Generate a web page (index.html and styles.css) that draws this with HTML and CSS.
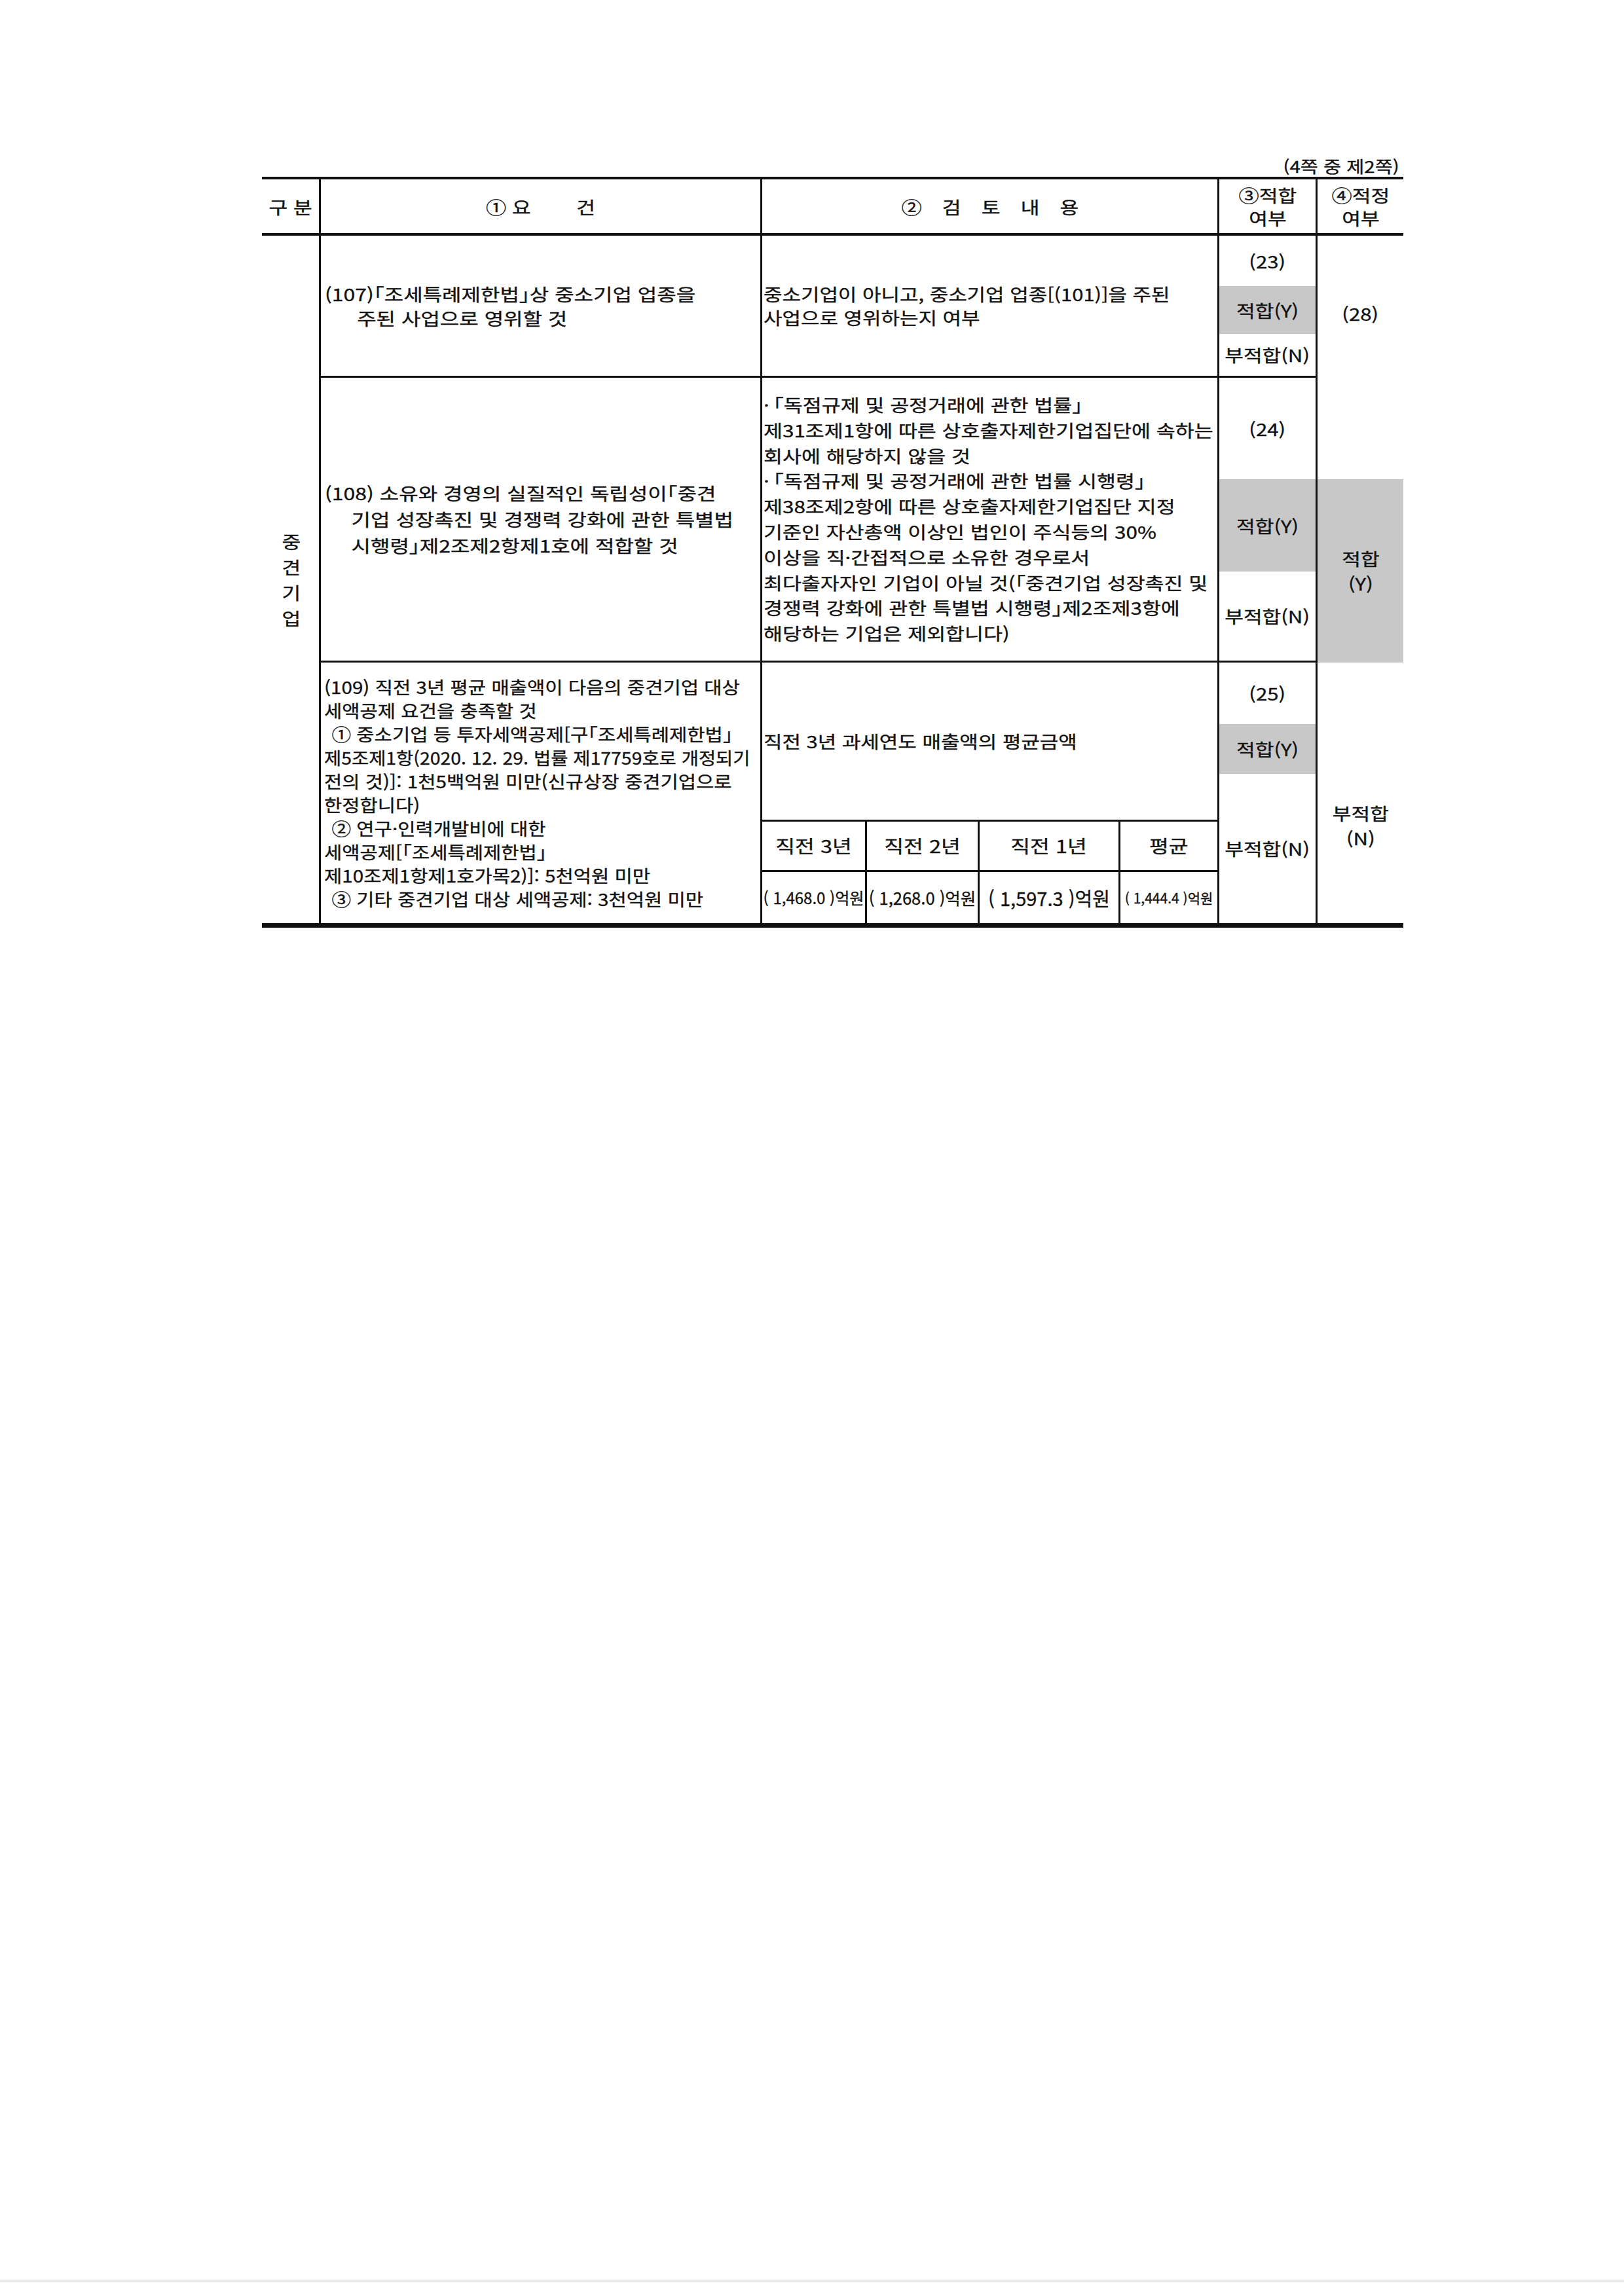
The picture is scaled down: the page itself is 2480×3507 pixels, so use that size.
FILE: index.html
```html
<!DOCTYPE html>
<html lang="ko">
<head>
<meta charset="utf-8">
<title>중견기업 검토표 (4쪽 중 제2쪽)</title>
<link rel="stylesheet" href="styles.css">
</head>
<body>
<div class="page">
  <div class="sheet">
    <div class="page-no"><span class="tx r">(4쪽 중 제2쪽)</span></div>
    <div class="grid">
      <div class="cell hd col1"><span class="tx c">구 분</span></div>
      <div class="cell hd col2"><span class="tx c">① 요<span class="gap"></span>건</span></div>
      <div class="cell hd col3"><span class="tx c">②<span class="sp"></span>검<span class="sp"></span>토<span class="sp"></span>내<span class="sp"></span>용</span></div>
      <div class="cell hd col4"><span class="tx c">③적합<br>여부</span></div>
      <div class="cell hd col5"><span class="tx c">④적정<br>여부</span></div>

      <div class="cell cat"><span class="tx c">중<br>견<br>기<br>업</span></div>

      <div class="cell req row2 req107">
        <div class="tx l s123">
          <div>(107)「조세특례제한법」상 중소기업 업종을</div>
          <div class="hang48">주된 사업으로 영위할 것</div>
        </div>
      </div>
      <div class="cell rev row2">
        <div class="tx l s119">
          <div>중소기업이 아니고, 중소기업 업종[(101)]을 주된</div>
          <div>사업으로 영위하는지 여부</div>
        </div>
      </div>
      <div class="cell fit row2">
        <div class="blk h77"><span class="tx c">(23)</span></div>
        <div class="blk gray h73"><span class="tx c">적합(Y)</span></div>
        <div class="blk rest"><span class="tx c">부적합(N)</span></div>
      </div>

      <div class="cell final">
        <div class="blk f-top"><span class="tx c">(28)</span></div>
        <div class="blk f-blank"></div>
        <div class="blk gray f-yes"><span class="tx c">적합<br>(Y)</span></div>
        <div class="blk rest f-no"><span class="tx c">부적합<br>(N)</span></div>
      </div>

      <div class="cell req row3 req108">
        <div class="tx l s123">
          <div>(108) 소유와 경영의 실질적인 독립성이「중견</div>
          <div class="hang40">기업 성장촉진 및 경쟁력 강화에 관한 특별법</div>
          <div class="hang40">시행령」제2조제2항제1호에 적합할 것</div>
        </div>
      </div>
      <div class="cell rev row3 rev108">
        <div class="tx l s121">
          <div>·&#8201;「독점규제 및 공정거래에 관한 법률」</div>
          <div>제31조제1항에 따른 상호출자제한기업집단에 속하는</div>
          <div>회사에 해당하지 않을 것</div>
          <div>·&#8201;「독점규제 및 공정거래에 관한 법률 시행령」</div>
          <div>제38조제2항에 따른 상호출자제한기업집단 지정</div>
          <div>기준인 자산총액 이상인 법인이 주식등의 30%</div>
          <div>이상을 직·간접적으로 소유한 경우로서</div>
          <div>최다출자자인 기업이 아닐 것(「중견기업 성장촉진 및</div>
          <div>경쟁력 강화에 관한 특별법 시행령」제2조제3항에</div>
          <div>해당하는 기업은 제외합니다)</div>
        </div>
      </div>
      <div class="cell fit row3">
        <div class="blk h155"><span class="tx c">(24)</span></div>
        <div class="blk gray h141"><span class="tx c">적합(Y)</span></div>
        <div class="blk rest"><span class="tx c">부적합(N)</span></div>
      </div>

      <div class="cell req row4 req109">
        <div class="tx l s114">
          <div>(109) 직전 3년 평균 매출액이 다음의 중견기업 대상</div>
          <div>세액공제 요건을 충족할 것</div>
          <div class="ind">① 중소기업 등 투자세액공제[구「조세특례제한법」</div>
          <div class="tight">제5조제1항(2020. 12. 29. 법률 제17759호로 개정되기</div>
          <div>전의 것)]: 1천5백억원 미만(신규상장 중견기업으로</div>
          <div>한정합니다)</div>
          <div class="ind">② 연구·인력개발비에 대한</div>
          <div>세액공제[「조세특례제한법」</div>
          <div>제10조제1항제1호가목2)]: 5천억원 미만</div>
          <div class="ind">③ 기타 중견기업 대상 세액공제: 3천억원 미만</div>
        </div>
      </div>
      <div class="cell rev row4 rev109">
        <div class="rev-top"><span class="tx l s119">직전 3년 과세연도 매출액의 평균금액</span></div>
        <div class="sub">
          <div class="sc sh"><span class="tx c">직전 3년</span></div>
          <div class="sc sh"><span class="tx c">직전 2년</span></div>
          <div class="sc sh"><span class="tx c">직전 1년</span></div>
          <div class="sc sh last"><span class="tx c">평균</span></div>
          <div class="sc sv v1">( 1,468.0 )억원</div>
          <div class="sc sv v2">( 1,268.0 )억원</div>
          <div class="sc sv v3">( 1,597.3 )억원</div>
          <div class="sc sv v4 last">( 1,444.4 )억원</div>
        </div>
      </div>
      <div class="cell fit row4">
        <div class="blk h94"><span class="tx c">(25)</span></div>
        <div class="blk gray h76"><span class="tx c">적합(Y)</span></div>
        <div class="blk rest"><span class="tx c">부적합(N)</span></div>
      </div>
    </div>
  </div>
  <div class="scan-edge"></div>
</div>
</body>
</html>
```

FILE: styles.css
```css
html, body {
  margin: 0;
  padding: 0;
  background: #ffffff;
}

body {
  font-family: "Noto Sans CJK KR", "Noto Sans", sans-serif;
  color: #121212;
  font-feature-settings: "halt";
  -webkit-text-stroke: 0.35px #121212;
}

.page {
  width: 2480px;
  height: 3507px;
  display: flex;
  flex-direction: column;
  overflow: hidden;
}

.sheet {
  margin-left: 400px;
  width: 1743px;
  padding-top: 238px;
}

/* scanned print uses a wide face: scale Noto horizontally */
.tx {
  display: inline-block;
  transform: scaleX(1.2);
}
.tx.l { transform-origin: 0 50%; }
.tx.c { transform-origin: 50% 50%; }
.tx.r { transform-origin: 100% 50%; }
.tx.s114 { transform: scaleX(1.14); }
.tx.s119 { transform: scaleX(1.19); }
.tx.s121 { transform: scaleX(1.21); }
.tx.s123 { transform: scaleX(1.23); }

.page-no {
  font-size: 24.5px;
  line-height: 32px;
  height: 32px;
  text-align: right;
  padding-right: 6px;
}

.grid {
  display: grid;
  grid-template-columns: 90px 674px 698px 150px 131px;
  grid-template-rows: 86px 217px 435px 398px;
  border-top: 4px solid #111;
  border-bottom: 7px solid #111;
}

.cell {
  box-sizing: border-box;
  border-right: 3px solid #111;
  border-bottom: 3px solid #111;
  font-size: 26px;
  line-height: 36px;
  white-space: nowrap;
}

/* header */
.hd {
  display: flex;
  align-items: center;
  justify-content: center;
  text-align: center;
  grid-row: 1;
  line-height: 35px;
  border-bottom-width: 4px;
}
.col1 { grid-column: 1; }
.col2 { grid-column: 2; }
.col3 { grid-column: 3; }
.col4 { grid-column: 4; }
.col5 { grid-column: 5; border-right: none; }

.gap {
  display: inline-block;
  width: 58px;
}
.sp {
  display: inline-block;
  width: 26px;
}

/* category column */
.cat {
  grid-column: 1;
  grid-row: 2 / span 3;
  border-bottom: none;
  display: flex;
  align-items: center;
  justify-content: center;
  text-align: center;
  line-height: 39px;
  padding-left: 2px;
}

.row2 { grid-row: 2; }
.row3 { grid-row: 3; }
.row4 { grid-row: 4; border-bottom: none; }

/* requirement column */
.req {
  grid-column: 2;
  display: flex;
  flex-direction: column;
  justify-content: center;
  align-items: flex-start;
  padding-left: 6px;
}
.req107 { line-height: 37px; }
.req108 { line-height: 40px; }
.req109 {
  padding-left: 5px;
  line-height: 36px;
}
.tight {
  transform: scaleX(0.96);
  transform-origin: 0 50%;
}
.hang48 { padding-left: 40px; }
.hang40 { padding-left: 33px; }
.ind { padding-left: 10px; }

/* review column */
.rev {
  grid-column: 3;
  display: flex;
  flex-direction: column;
  justify-content: center;
  align-items: flex-start;
  padding-left: 2px;
  line-height: 36px;
}
.rev108 { line-height: 38.8px; }
.rev109 {
  padding-left: 0;
  justify-content: flex-start;
  align-items: stretch;
}
.rev-top {
  flex: 1;
  display: flex;
  align-items: center;
  padding-left: 2px;
}

.sub {
  display: grid;
  grid-template-columns: 160px 172px 215px 1fr;
  grid-template-rows: 77px 78px;
  border-top: 3px solid #111;
  box-sizing: border-box;
}
.sc {
  box-sizing: border-box;
  border-right: 3px solid #111;
  display: flex;
  align-items: center;
  justify-content: center;
}
.sc.last { border-right: none; }
.sh {
  border-bottom: 3px solid #111;
  font-size: 27px;
}
.v1 { font-size: 24px; }
.v2 { font-size: 25.5px; }
.v3 { font-size: 29px; }
.v4 { font-size: 21px; }

/* fit (③) column */
.fit {
  grid-column: 4;
  display: flex;
  flex-direction: column;
}
.blk {
  display: flex;
  align-items: center;
  justify-content: center;
  text-align: center;
  flex: none;
}
.gray { background: #c8c8c8; }
.rest { flex: 1; }
.h77 { height: 77px; }
.h73 { height: 73px; }
.h155 { height: 155px; }
.h141 { height: 141px; }
.h94 { height: 94px; }
.h76 { height: 76px; }

/* final (④) column */
.final {
  grid-column: 5;
  grid-row: 2 / span 3;
  border-right: none;
  border-bottom: none;
  display: flex;
  flex-direction: column;
  line-height: 38px;
}
.f-top {
  height: 217px;
  box-sizing: border-box;
  padding-top: 20px;
}
.f-blank { height: 155px; }
.f-yes { height: 280px; }
.f-no {
  box-sizing: border-box;
  padding-top: 100px;
}

.scan-edge {
  margin-top: auto;
  margin-bottom: 22px;
  height: 3px;
  background: #e6e6e6;
}
```
